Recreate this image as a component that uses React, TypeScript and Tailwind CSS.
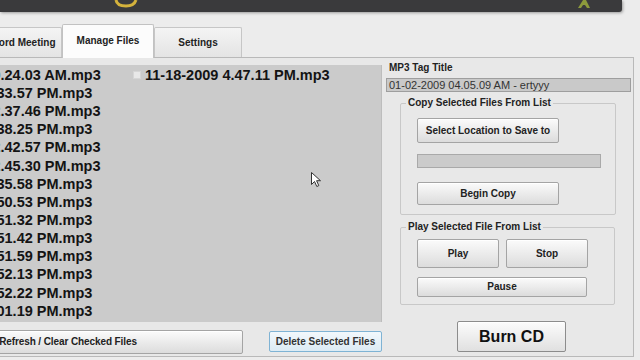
import React from "react";

const btn =
  "flex items-center justify-center rounded-[2px] border border-[#a4a4a4] bg-linear-to-b from-[#fbfbfb] to-[#dcdcdc] text-[10px] font-bold text-[#222] leading-none shadow-[inset_0_1px_0_#ffffff] whitespace-nowrap";

const col1 = [
  "11-18-2009 10.24.03 AM.mp3",
  "11-18-2009 1.33.57 PM.mp3",
  "11-18-2009 12.37.46 PM.mp3",
  "11-18-2009 1.38.25 PM.mp3",
  "11-18-2009 12.42.57 PM.mp3",
  "11-18-2009 12.45.30 PM.mp3",
  "11-18-2009 1.35.58 PM.mp3",
  "11-18-2009 1.50.53 PM.mp3",
  "11-18-2009 1.51.32 PM.mp3",
  "11-18-2009 1.51.42 PM.mp3",
  "11-18-2009 1.51.59 PM.mp3",
  "11-18-2009 1.52.13 PM.mp3",
  "11-18-2009 1.52.22 PM.mp3",
  "11-18-2009 2.01.19 PM.mp3",
];
const col2 = ["11-18-2009 4.47.11 PM.mp3"];

function Column({ items }: { items: string[] }) {
  return (
    <div className="flex w-[238px] shrink-0 flex-col">
      {items.map((t) => (
        <div key={t} className="flex h-[18.15px] items-center whitespace-nowrap">
          <div className="h-[8px] w-[8px] shrink-0 border border-[#d6d6d6] bg-[#e8e8e8]" />
          <span className="ml-[4px] text-[14.5px] font-bold leading-none text-[#141414]">{t}</span>
        </div>
      ))}
    </div>
  );
}

export default function App() {
  return (
    <div className="relative h-[360px] w-[640px] overflow-hidden bg-[#ececec] font-['Liberation_Sans',Arial,sans-serif]">
      {/* banner */}
      <div className="relative h-[12px] w-[622px] rounded-br-[3px] bg-[#3a3a3c] shadow-[1px_1px_3px_rgba(0,0,0,0.35)]">
        <svg className="absolute left-[113px] top-0" width="26" height="9" viewBox="0 0 26 9">
          <path d="M3 0 Q4 6 13 6 Q21 6 23 0" fill="none" stroke="#d4b23c" strokeWidth="3" />
        </svg>
        <svg className="absolute left-[575px] top-0" width="18" height="10" viewBox="0 0 18 10">
          <path d="M3 8 L8 0 L11 0 L15 8 L12 8 L10 5 L8 5 L6 8 Z" fill="#8c9a3c" />
        </svg>
      </div>

      {/* tabs */}
      <div className="flex h-[45px] items-end">
        <div className="-ml-[26px] flex h-[30px] w-[88px] justify-center rounded-t-[2px] border border-b-0 border-[#c6c6c6] bg-linear-to-b from-[#f4f4f4] to-[#e4e4e4] pt-[9px] text-[10px] font-bold leading-[12px] text-[#222] whitespace-nowrap">
          Record Meeting
        </div>
        <div className="relative z-10 -mb-[1px] flex h-[34px] w-[92px] justify-center rounded-t-[2px] border border-b-0 border-[#c2c2c2] bg-[#fcfcfc] pt-[10px] text-[10px] font-bold leading-[12px] text-[#222] whitespace-nowrap">
          Manage Files
        </div>
        <div className="flex h-[30px] w-[88px] justify-center rounded-t-[2px] border border-b-0 border-[#c6c6c6] bg-linear-to-b from-[#f4f4f4] to-[#e4e4e4] pt-[9px] text-[10px] font-bold leading-[12px] text-[#222] whitespace-nowrap">
          Settings
        </div>
      </div>

      {/* panel */}
      <div className="flex h-[300px] w-[634px] border-t border-r border-b border-[#b9b9b9] bg-[#e8e8e8]">
        {/* left column */}
        <div className="flex w-[382px] shrink-0 flex-col pt-[7px]">
          <div className="h-[257px] overflow-hidden border-r border-[#bdbdbd] bg-[#cbcbcb]">
            <div className="-ml-[105px] flex pt-[1px]">
              <Column items={col1} />
              <Column items={col2} />
            </div>
          </div>
          <div className="mt-[8px] flex items-start">
            <div className={`${btn} -ml-[107px] h-[24px] w-[350px] shrink-0 tracking-[-0.1px]`}>
              Refresh / Clear Checked Files
            </div>
            <div className="ml-[26px] mt-[1px] flex h-[21px] w-[113px] shrink-0 items-center justify-center rounded-[2px] border border-[#7fb3d4] bg-linear-to-b from-[#f2f8fc] to-[#dcebf4] text-[10px] font-bold leading-none text-[#333] whitespace-nowrap">
              Delete Selected Files
            </div>
          </div>
        </div>

        {/* right column */}
        <div className="ml-[1px] flex w-[250px] flex-col">
          <div className="pl-[6px] pt-[4px] text-[10px] font-bold leading-[12px] text-[#222]">MP3 Tag Title</div>
          <div className="ml-[3px] mt-[4px] h-[14px] w-[245px] border border-[#9e9e9e] bg-[#c9c9c9] pl-[2px] text-[11px] leading-[12px] text-[#333] whitespace-nowrap">
            01-02-2009 04.05.09 AM - ertyyy
          </div>

          <fieldset className="ml-[17px] mt-[5px] w-[216px] rounded-[2px] border border-[#c8c8c8] pb-[9px]">
            <legend className="ml-[5px] px-[2px] text-[10px] font-bold leading-[12px] text-[#222]">
              Copy Selected Files From List
            </legend>
            <div className="flex flex-col pl-[16px]">
              <div className={`${btn} mt-[9px] h-[25px] w-[142px]`}>Select Location to Save to</div>
              <div className="mt-[11px] h-[14px] w-[184px] border border-[#a9a9a9] bg-[#cbcbcb]" />
              <div className={`${btn} mt-[14px] h-[23px] w-[142px]`}>Begin Copy</div>
            </div>
          </fieldset>

          <fieldset className="ml-[17px] mt-[6px] w-[215px] rounded-[2px] border border-[#c8c8c8] pb-[7px]">
            <legend className="ml-[5px] px-[2px] text-[10px] font-bold leading-[12px] text-[#222]">
              Play Selected File From List
            </legend>
            <div className="flex flex-col pl-[16px]">
              <div className="mt-[6px] flex">
                <div className={`${btn} h-[29px] w-[82px]`}>Play</div>
                <div className={`${btn} ml-[7px] h-[29px] w-[82px]`}>Stop</div>
              </div>
              <div className={`${btn} mt-[9px] h-[20px] w-[170px]`}>Pause</div>
            </div>
          </fieldset>

          <div className="ml-[74px] mt-[16px] flex h-[31px] w-[109px] items-center justify-center rounded-[2px] border border-[#8c8c8c] bg-linear-to-b from-[#fcfcfc] to-[#e0e0e0] text-[16px] font-bold leading-none text-[#111] shadow-[inset_0_1px_0_#ffffff]">
            Burn CD
          </div>
        </div>
      </div>

      {/* mouse cursor */}
      <svg className="absolute left-[311px] top-[172px]" width="11" height="16" viewBox="0 0 11 16">
        <path d="M0.5 0.5 L0.5 12.5 L3.5 9.5 L5.8 14.5 L7.8 13.6 L5.6 8.7 L9.5 8.7 Z" fill="#ffffff" stroke="#333" strokeWidth="1" strokeLinejoin="round" />
      </svg>
    </div>
  );
}
